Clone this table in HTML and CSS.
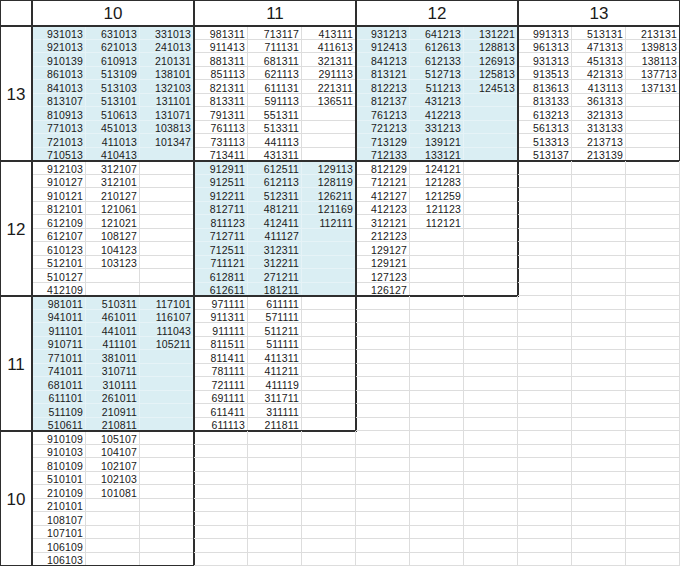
FILE: index.html
```html
<!DOCTYPE html>
<html>
<head>
<meta charset="utf-8">
<link rel="stylesheet" href="styles.css">
</head>
<body>
<div class="sheet">
  <div class="corner box"></div>
  <div class="hd box">10</div>
  <div class="hd box">11</div>
  <div class="hd box">12</div>
  <div class="hd box">13</div>

  <div class="rl box">13</div>
  <div class="blk blue box">
    <span>931013</span><span>921013</span><span>910139</span><span>861013</span><span>841013</span><span>813107</span><span>810913</span><span>771013</span><span>721013</span><span>710513</span>
    <span>631013</span><span>621013</span><span>610913</span><span>513109</span><span>513103</span><span>513101</span><span>510613</span><span>451013</span><span>411013</span><span>410413</span>
    <span>331013</span><span>241013</span><span>210131</span><span>138101</span><span>132103</span><span>131101</span><span>131071</span><span>103813</span><span>101347</span><span></span>
  </div>
  <div class="blk box">
    <span>981311</span><span>911413</span><span>881311</span><span>851113</span><span>821311</span><span>813311</span><span>791311</span><span>761113</span><span>731113</span><span>713411</span>
    <span>713117</span><span>711131</span><span>681311</span><span>621113</span><span>611131</span><span>591113</span><span>551311</span><span>513311</span><span>441113</span><span>431311</span>
    <span>413111</span><span>411613</span><span>321311</span><span>291113</span><span>221311</span><span>136511</span><span></span><span></span><span></span><span></span>
  </div>
  <div class="blk blue box">
    <span>931213</span><span>912413</span><span>841213</span><span>813121</span><span>812213</span><span>812137</span><span>761213</span><span>721213</span><span>713129</span><span>712133</span>
    <span>641213</span><span>612613</span><span>612133</span><span>512713</span><span>511213</span><span>431213</span><span>412213</span><span>331213</span><span>139121</span><span>133121</span>
    <span>131221</span><span>128813</span><span>126913</span><span>125813</span><span>124513</span><span></span><span></span><span></span><span></span><span></span>
  </div>
  <div class="blk box">
    <span>991313</span><span>961313</span><span>931313</span><span>913513</span><span>813613</span><span>813133</span><span>613213</span><span>561313</span><span>513313</span><span>513137</span>
    <span>513131</span><span>471313</span><span>451313</span><span>421313</span><span>413113</span><span>361313</span><span>321313</span><span>313133</span><span>213713</span><span>213139</span>
    <span>213131</span><span>139813</span><span>138113</span><span>137713</span><span>137131</span><span></span><span></span><span></span><span></span><span></span>
  </div>

  <div class="rl box">12</div>
  <div class="blk box">
    <span>912103</span><span>910127</span><span>910121</span><span>812101</span><span>612109</span><span>612107</span><span>610123</span><span>512101</span><span>510127</span><span>412109</span>
    <span>312107</span><span>312101</span><span>210127</span><span>121061</span><span>121021</span><span>108127</span><span>104123</span><span>103123</span><span></span><span></span>
    <span></span><span></span><span></span><span></span><span></span><span></span><span></span><span></span><span></span><span></span>
  </div>
  <div class="blk blue box">
    <span>912911</span><span>912511</span><span>912211</span><span>812711</span><span>811123</span><span>712711</span><span>712511</span><span>711121</span><span>612811</span><span>612611</span>
    <span>612511</span><span>612113</span><span>512311</span><span>481211</span><span>412411</span><span>411127</span><span>312311</span><span>312211</span><span>271211</span><span>181211</span>
    <span>129113</span><span>128119</span><span>126211</span><span>121169</span><span>112111</span><span></span><span></span><span></span><span></span><span></span>
  </div>
  <div class="blk box">
    <span>812129</span><span>712121</span><span>412127</span><span>412123</span><span>312121</span><span>212123</span><span>129127</span><span>129121</span><span>127123</span><span>126127</span>
    <span>124121</span><span>121283</span><span>121259</span><span>121123</span><span>112121</span><span></span><span></span><span></span><span></span><span></span>
    <span></span><span></span><span></span><span></span><span></span><span></span><span></span><span></span><span></span><span></span>
  </div>
  <div class="blk">
    <span></span><span></span><span></span><span></span><span></span><span></span><span></span><span></span><span></span><span></span>
    <span></span><span></span><span></span><span></span><span></span><span></span><span></span><span></span><span></span><span></span>
    <span></span><span></span><span></span><span></span><span></span><span></span><span></span><span></span><span></span><span></span>
  </div>

  <div class="rl box">11</div>
  <div class="blk blue box">
    <span>981011</span><span>941011</span><span>911101</span><span>910711</span><span>771011</span><span>741011</span><span>681011</span><span>611101</span><span>511109</span><span>510611</span>
    <span>510311</span><span>461011</span><span>441011</span><span>411101</span><span>381011</span><span>310711</span><span>310111</span><span>261011</span><span>210911</span><span>210811</span>
    <span>117101</span><span>116107</span><span>111043</span><span>105211</span><span></span><span></span><span></span><span></span><span></span><span></span>
  </div>
  <div class="blk box">
    <span>971111</span><span>911311</span><span>911111</span><span>811511</span><span>811411</span><span>781111</span><span>721111</span><span>691111</span><span>611411</span><span>611113</span>
    <span>611111</span><span>571111</span><span>511211</span><span>511111</span><span>411311</span><span>411211</span><span>411119</span><span>311711</span><span>311111</span><span>211811</span>
    <span></span><span></span><span></span><span></span><span></span><span></span><span></span><span></span><span></span><span></span>
  </div>
  <div class="blk">
    <span></span><span></span><span></span><span></span><span></span><span></span><span></span><span></span><span></span><span></span>
    <span></span><span></span><span></span><span></span><span></span><span></span><span></span><span></span><span></span><span></span>
    <span></span><span></span><span></span><span></span><span></span><span></span><span></span><span></span><span></span><span></span>
  </div>
  <div class="blk">
    <span></span><span></span><span></span><span></span><span></span><span></span><span></span><span></span><span></span><span></span>
    <span></span><span></span><span></span><span></span><span></span><span></span><span></span><span></span><span></span><span></span>
    <span></span><span></span><span></span><span></span><span></span><span></span><span></span><span></span><span></span><span></span>
  </div>

  <div class="rl box">10</div>
  <div class="blk box">
    <span>910109</span><span>910103</span><span>810109</span><span>510101</span><span>210109</span><span>210101</span><span>108107</span><span>107101</span><span>106109</span><span>106103</span>
    <span>105107</span><span>104107</span><span>102107</span><span>102103</span><span>101081</span><span></span><span></span><span></span><span></span><span></span>
    <span></span><span></span><span></span><span></span><span></span><span></span><span></span><span></span><span></span><span></span>
  </div>
  <div class="blk">
    <span></span><span></span><span></span><span></span><span></span><span></span><span></span><span></span><span></span><span></span>
    <span></span><span></span><span></span><span></span><span></span><span></span><span></span><span></span><span></span><span></span>
    <span></span><span></span><span></span><span></span><span></span><span></span><span></span><span></span><span></span><span></span>
  </div>
  <div class="blk">
    <span></span><span></span><span></span><span></span><span></span><span></span><span></span><span></span><span></span><span></span>
    <span></span><span></span><span></span><span></span><span></span><span></span><span></span><span></span><span></span><span></span>
    <span></span><span></span><span></span><span></span><span></span><span></span><span></span><span></span><span></span><span></span>
  </div>
  <div class="blk">
    <span></span><span></span><span></span><span></span><span></span><span></span><span></span><span></span><span></span><span></span>
    <span></span><span></span><span></span><span></span><span></span><span></span><span></span><span></span><span></span><span></span>
    <span></span><span></span><span></span><span></span><span></span><span></span><span></span><span></span><span></span><span></span>
  </div>
</div>
</body>
</html>
```
FILE: styles.css
```css
* { box-sizing: border-box; }
html, body { margin: 0; padding: 0; background: #ffffff; }
body {
  font-family: "Liberation Sans", Arial, sans-serif;
  color: #1a1a1a;
}
.sheet {
  display: grid;
  grid-template-columns: 32px repeat(4, 162px);
  grid-template-rows: 26px repeat(4, 135px);
  width: 680px;
  height: 566px;
  overflow: hidden;
}
.box {
  outline: 2px solid #2e2e2e;
  outline-offset: -1px;
}
.corner { background: #fff; }
.hd, .rl {
  display: flex;
  align-items: center;
  justify-content: center;
  font-size: 17px;
  background: #fff;
}
.hd { padding-top: 2px; }
.rl { padding-top: 2px; }
.blk {
  display: grid;
  grid-template-columns: repeat(3, 54px);
  grid-template-rows: repeat(10, 13.5px);
  grid-auto-flow: column;
}
.blk span {
  border-right: 1px solid #dddddd;
  border-bottom: 1px solid #dddddd;
  font-size: 10.5px;
  letter-spacing: 0.15px;
  text-align: right;
  padding-right: 2px;
  padding-top: 1.5px;
  line-height: 12px;
  white-space: nowrap;
}
.blue { background: #daeef3; }
.blue span { border-color: #e6f3f7; }
```
